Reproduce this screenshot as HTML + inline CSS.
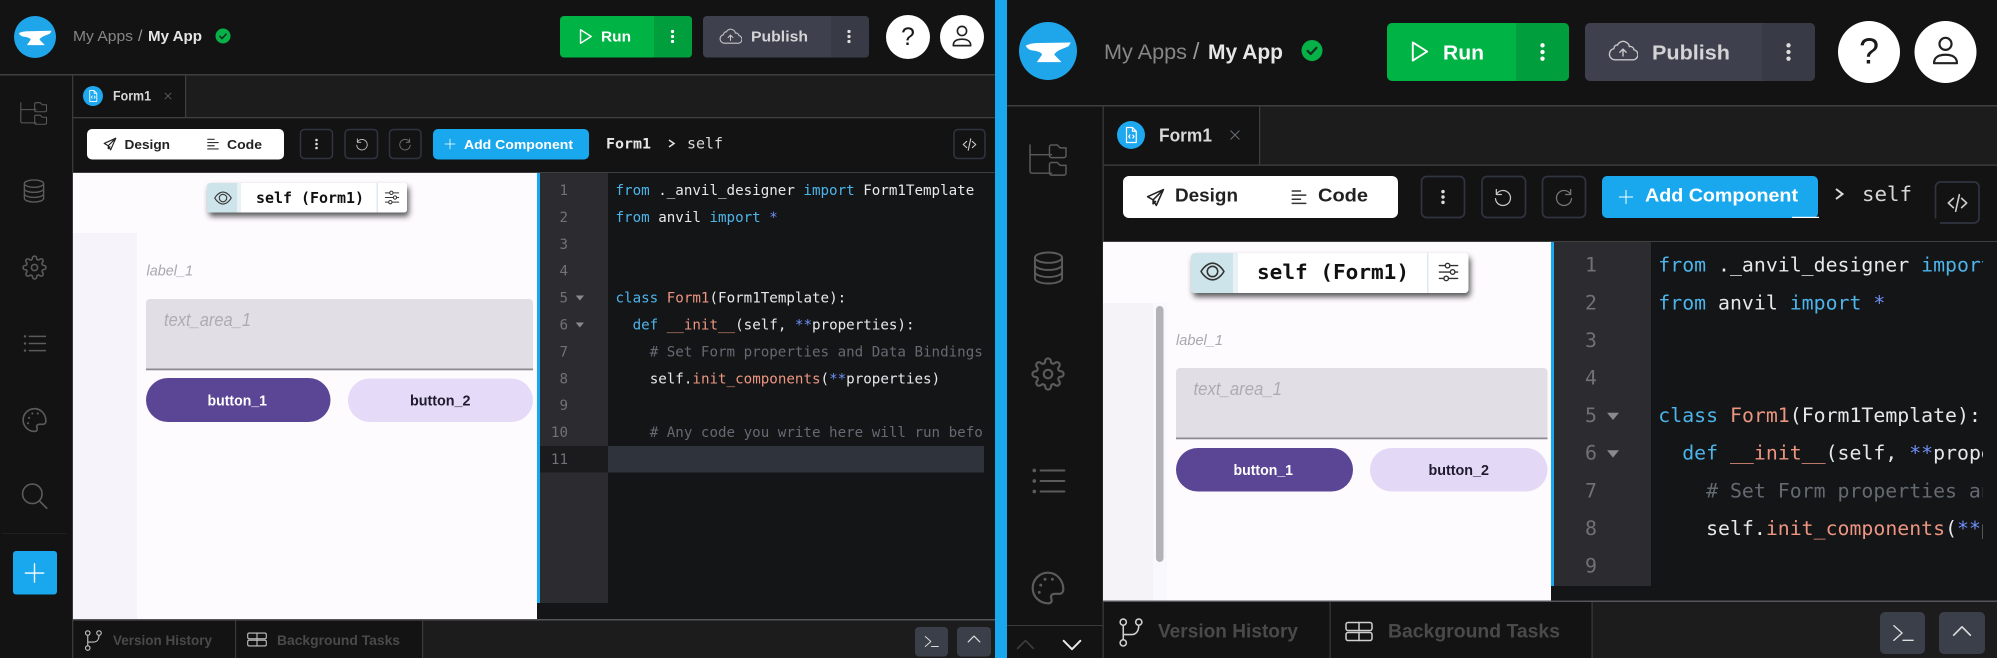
<!DOCTYPE html>
<html lang="en"><head><meta charset="utf-8"><title>Anvil Editor</title>
<style>
html,body{margin:0;padding:0;background:#131314;width:1997px;height:658px;overflow:hidden}
svg{display:block}
text{font-family:"Liberation Sans",sans-serif;white-space:pre}
.m{font-family:"DejaVu Sans Mono","Liberation Mono",monospace}
.b{font-weight:700}
.i{font-style:italic}
.ic{fill:none;stroke:currentColor;stroke-width:1.5;stroke-linecap:round;stroke-linejoin:round}
.k{fill:#4db4ea}.w{fill:#e6e8ea}.s{fill:#ec9580}.p{fill:#6f8ff7}.c{fill:#646a71}
.n{fill:#717176;text-anchor:end}
</style></head><body>
<svg xmlns="http://www.w3.org/2000/svg" width="1997" height="658" viewBox="0 0 1997 658">
<defs>
<symbol id="tree" viewBox="0 0 40 36"><g class="ic"><path d="M1 1v27a2 2 0 0 0 2 2h20M1 11h22"/><path d="M21 5a2 2 0 0 1 2-2h6l3 3h6v8a2 2 0 0 1-2 2H23a2 2 0 0 1-2-2zM21 23a2 2 0 0 1 2-2h6l3 3h6v8a2 2 0 0 1-2 2H23a2 2 0 0 1-2-2z" transform="translate(0 -2)"/></g></symbol>
<symbol id="db" viewBox="0 0 24 26"><g class="ic"><ellipse cx="12" cy="5" rx="10.5" ry="4"/><path d="M1.500 5v16c0 2.200 4.700 4 10.500 4s10.500-1.800 10.500-4V5M1.500 10.500c0 2.200 4.700 4 10.500 4s10.500-1.800 10.500-4M1.500 16c0 2.200 4.700 4 10.500 4s10.500-1.800 10.500-4"/></g></symbol>
<symbol id="gear" viewBox="0 0 24 24"><g class="ic"><circle cx="12" cy="12" r="3"/><path d="M19.400 15a1.650 1.650 0 0 0 .33 1.820l.06.06a2 2 0 0 1 0 2.830 2 2 0 0 1-2.830 0l-.06-.06a1.650 1.650 0 0 0-1.820-.33 1.650 1.650 0 0 0-1 1.510V21a2 2 0 0 1-2 2 2 2 0 0 1-2-2v-.09A1.650 1.650 0 0 0 9 19.400a1.650 1.650 0 0 0-1.820.33l-.06.06a2 2 0 0 1-2.830 0 2 2 0 0 1 0-2.830l.06-.06a1.650 1.650 0 0 0 .33-1.820 1.650 1.650 0 0 0-1.510-1H3a2 2 0 0 1-2-2 2 2 0 0 1 2-2h.09A1.650 1.650 0 0 0 4.600 9a1.650 1.650 0 0 0-.33-1.820l-.06-.06a2 2 0 0 1 0-2.830 2 2 0 0 1 2.830 0l.06.06a1.650 1.650 0 0 0 1.820.33H9a1.650 1.650 0 0 0 1-1.510V3a2 2 0 0 1 2-2 2 2 0 0 1 2 2v.09a1.650 1.650 0 0 0 1 1.510 1.650 1.650 0 0 0 1.820-.33l.06-.06a2 2 0 0 1 2.830 0 2 2 0 0 1 0 2.830l-.06.06a1.650 1.650 0 0 0-.33 1.820V9a1.650 1.650 0 0 0 1.510 1H21a2 2 0 0 1 2 2 2 2 0 0 1-2 2h-.09a1.650 1.650 0 0 0-1.510 1z"/></g></symbol>
<symbol id="list" viewBox="0 0 24 20"><g class="ic"><path d="M6 2.500h17M6 10h17M6 17.500h17"/></g><g fill="currentColor"><circle cx="1.500" cy="2.500" r="1.300"/><circle cx="1.500" cy="10" r="1.300"/><circle cx="1.500" cy="17.500" r="1.300"/></g></symbol>
<symbol id="pal" viewBox="0 0 24 24"><path class="ic" d="M12 1.500a10.500 10.500 0 1 0 0 21c2.300 0 3-1.600 2.300-3.100-.8-1.900.3-3.400 2.200-3.400h3c1.800 0 3-1.300 3-3.100C22.500 6.600 17.800 1.500 12 1.500z"/><g fill="currentColor"><circle cx="7" cy="10" r="1"/><circle cx="10" cy="6" r="1"/><circle cx="15" cy="6" r="1"/><circle cx="6" cy="15" r="1"/></g></symbol>
<symbol id="search" viewBox="0 0 24 24"><g class="ic"><circle cx="10" cy="10" r="9"/><path d="M16.500 16.500L23.500 23.500"/></g></symbol>
<symbol id="plus" viewBox="0 0 24 24"><path class="ic" d="M12 2v20M2 12h20"/></symbol>
<symbol id="plane" viewBox="0 0 24 24"><path class="ic" style="stroke-width:2" d="M22 2L2 11l7 4 4 7zM22 2L9 15v5l3-3"/></symbol>
<symbol id="align" viewBox="0 0 24 24"><path class="ic" style="stroke-width:2" d="M3 4h11M3 9.500h18M3 15h11M3 20.500h18"/></symbol>
<symbol id="dots" viewBox="0 0 24 24"><g fill="currentColor"><circle cx="12" cy="4" r="2.600"/><circle cx="12" cy="12" r="2.600"/><circle cx="12" cy="20" r="2.600"/></g></symbol>
<symbol id="undo" viewBox="0 0 24 24"><path class="ic" d="M4 3v6h6M4 9a9 9 0 1 1-1 5"/></symbol>
<symbol id="redo" viewBox="0 0 24 24"><path class="ic" d="M20 3v6h-6M20 9a9 9 0 1 0 1 5"/></symbol>
<symbol id="code" viewBox="0 0 24 24"><path class="ic" style="stroke-width:1.800" d="M7.500 7L2 12l5.500 5M16.500 7l5.500 5-5.500 5M14 3l-4 18"/></symbol>
<symbol id="play" viewBox="0 0 24 24"><path class="ic" style="stroke-width:2" d="M5 2.500l15 9.500-15 9.500z"/></symbol>
<symbol id="cloud" viewBox="0 0 24 24"><path class="ic" style="stroke-width:1.100" d="M5.500 19a4.500 4.500 0 0 1-.8-8.900C5 8 6 7 7.500 7.300 9 4.500 12 3.500 14.500 5c1.700.9 2.500 2.500 2.500 3.500 2-.5 3.700 1 3.700 2.500A4 4 0 0 1 19 19zM12 16V10.500M9.500 13L12 10.500l2.500 2.500"/></symbol>
<symbol id="user" viewBox="0 0 24 24"><g class="ic" style="stroke-width:1.800"><circle cx="12" cy="6.500" r="5"/><path d="M2.500 22.500c0-4.700 3.500-7 9.500-7s9.500 2.300 9.500 7z"/></g></symbol>
<symbol id="eye" viewBox="0 0 24 24"><g class="ic"><path d="M1 12s4.500-8 11-8 11 8 11 8-4.500 8-11 8-11-8-11-8z"/><circle cx="12" cy="12" r="5"/></g></symbol>
<symbol id="sliders" viewBox="0 0 24 24"><g class="ic"><path d="M2 5h6.500M13.500 5H22M2 12h12M19 12h3M2 19h5M12 19h10"/><circle cx="11" cy="5" r="2.500"/><circle cx="16.500" cy="12" r="2.500"/><circle cx="9.500" cy="19" r="2.500"/></g></symbol>
<symbol id="file" viewBox="0 0 24 24"><g class="ic" style="stroke-width:1.600"><path d="M6 2h8l5 5v15H6zM14 2v5h5"/><path d="M10.500 12l-1.500 2 1.500 2M14.500 12l1.500 2-1.500 2"/></g></symbol>
<symbol id="x" viewBox="0 0 24 24"><path class="ic" style="stroke-width:2.400" d="M3 3l18 18M21 3L3 21"/></symbol>
<symbol id="branch" viewBox="0 0 24 28"><g class="ic"><circle cx="5" cy="4" r="3"/><circle cx="5" cy="24" r="3"/><circle cx="20" cy="4" r="3"/><path d="M5 7v14M5 16h8c4 0 7-3 7-9"/></g></symbol>
<symbol id="tasks" viewBox="0 0 28 20"><g class="ic"><rect x="1" y="1" width="26" height="8" rx="2"/><rect x="1" y="11" width="26" height="8" rx="2"/><path d="M14 1v8M14 11v8"/></g></symbol>
<symbol id="term" viewBox="0 0 24 24"><path class="ic" d="M2 4l9 8-9 8M12 20h11"/></symbol>
<symbol id="up" viewBox="0 0 24 24"><path class="ic" style="stroke-width:2" d="M2 17L12 7l10 10"/></symbol>
<symbol id="down" viewBox="0 0 24 24"><path class="ic" style="stroke-width:2.400" d="M2 7l10 10L22 7"/></symbol>
<symbol id="logo" viewBox="0 0 42 42"><circle cx="21" cy="21" r="21" fill="#1fa5ea"/><path fill="#fff" d="M4.800 17.200C8 15.500 11 15.300 14 15.200L37.500 14.800 36 17.500C32 19.500 27 20.500 25.500 23.600L30.800 29.100H12.900L16.700 23.600C16 21.500 12 21 8.800 20.500 7 20 5.500 18.500 4.800 17.200z"/></symbol>
<symbol id="chk" viewBox="0 0 24 24"><circle cx="12" cy="12" r="12" fill="#06b147"/><path d="M7 12.500l3.500 3.500L17 9" fill="none" stroke="#11301c" stroke-width="2.600" stroke-linecap="round" stroke-linejoin="round"/></symbol>
<clipPath id="cl"><rect x="608" y="172" width="376" height="431"/></clipPath>
<clipPath id="cr"><rect x="1651" y="241" width="332" height="345"/></clipPath>
<filter id="sh" x="-10%" y="-30%" width="120%" height="170%"><feDropShadow dx="2" dy="4" stdDeviation="3" flood-color="#333" flood-opacity=".8"/></filter>
</defs>

<rect width="1997" height="658" fill="#131314"/>

<!-- LEFT PANEL -->
<rect x="185" y="75" width="810" height="42" fill="#1c1c1d"/>
<rect x="422" y="620" width="573" height="38" fill="#1c1c1d"/>
<rect x="0" y="74" width="995" height="1.500" fill="#3f3f40"/>
<rect x="73" y="117" width="922" height="1.300" fill="#3f3f40"/>
<rect x="72" y="75" width="1.300" height="583" fill="#3a3a3b"/>
<rect x="185" y="75" width="1.200" height="42" fill="#3f3f40"/>
<rect x="73" y="172" width="922" height="1.300" fill="#3f3f40"/>
<use href="#logo" x="14" y="16" width="42" height="42"/>
<text x="73" y="41" font-size="15" textLength="60" lengthAdjust="spacingAndGlyphs" fill="#868686">My Apps</text>
<text x="138" y="41" font-size="16" fill="#9a9a9a">/</text>
<text class="b" x="148" y="41" font-size="15" textLength="54" lengthAdjust="spacingAndGlyphs" fill="#e6e6e6">My App</text>
<use href="#chk" x="215.500" y="28.500" width="15" height="15"/>
<rect x="560" y="16" width="132" height="41.500" rx="4" fill="#00b345"/>
<path d="M654 16h34a4 4 0 0 1 4 4v33.500a4 4 0 0 1-4 4h-34z" fill="#009e3d"/>
<use href="#play" x="577" y="28" width="17" height="17" style="color:#fff"/>
<text class="b" x="601" y="41.500" font-size="15" textLength="30" lengthAdjust="spacingAndGlyphs" fill="#fff">Run</text>
<use href="#dots" x="665" y="29" width="15" height="15" style="color:#fff"/>
<rect x="703" y="16" width="166" height="41.500" rx="4" fill="#3e414d"/>
<path d="M831 16h34a4 4 0 0 1 4 4v33.500a4 4 0 0 1-4 4h-34z" fill="#383b45"/>
<use href="#cloud" x="719" y="25" width="23" height="23" style="color:#c8c8c8"/>
<text class="b" x="751" y="41.500" font-size="15" textLength="57" lengthAdjust="spacingAndGlyphs" fill="#d4d4d6">Publish</text>
<use href="#dots" x="841.500" y="29" width="15" height="15" style="color:#ddd"/>
<circle cx="908" cy="37" r="22" fill="#fff"/><text x="908" y="45" font-size="25" text-anchor="middle" fill="#1a1a1a">?</text>
<circle cx="962" cy="37" r="22" fill="#fff"/><use href="#user" x="951" y="25" width="22" height="22" style="color:#222"/>

<circle cx="93" cy="96" r="10" fill="#1ea8ef"/><use href="#file" x="86.500" y="89.500" width="13" height="13" style="color:#fff"/>
<text class="b" x="113" y="100.500" font-size="13.500" textLength="38" lengthAdjust="spacingAndGlyphs" fill="#d8d8d8">Form1</text>
<use href="#x" x="164" y="92" width="8" height="8" style="color:#666a72"/>

<rect x="87" y="129" width="197" height="30.500" rx="5" fill="#fff"/>
<use href="#plane" x="103" y="137" width="14" height="14" style="color:#222"/>
<text class="b" x="124.500" y="149" font-size="13" textLength="45.500" lengthAdjust="spacingAndGlyphs" fill="#222">Design</text>
<use href="#align" x="206" y="137" width="14" height="14" style="color:#333"/>
<text class="b" x="227" y="149" font-size="13" textLength="35" lengthAdjust="spacingAndGlyphs" fill="#222">Code</text>
<g fill="none" stroke="#2f3440" stroke-width="1.500"><rect x="300.500" y="129.500" width="32" height="29" rx="4"/><rect x="345" y="129.500" width="32.500" height="29" rx="4"/><rect x="389.500" y="129.500" width="31.500" height="29" rx="4"/><rect x="954" y="129.500" width="31" height="29" rx="4"/></g>
<use href="#dots" x="310.500" y="138" width="12" height="12" style="color:#ddd"/>
<use href="#undo" x="355" y="137" width="14" height="14" style="color:#c8c8c8"/>
<use href="#redo" x="398" y="137" width="14" height="14" style="color:#777"/>
<rect x="433" y="129" width="156" height="30.500" rx="5" fill="#19a8ee"/>
<use href="#plus" x="444" y="138" width="12" height="12" style="color:#fff"/>
<text class="b" x="464" y="149" font-size="13" textLength="109" lengthAdjust="spacingAndGlyphs" fill="#fff">Add Component</text>
<text class="m b" x="606" y="148.500" font-size="14.500" textLength="45" lengthAdjust="spacingAndGlyphs" fill="#e8e8e8">Form1</text>
<path d="M669 140l5 3.500-5 3.500" fill="none" stroke="#ddd" stroke-width="1.600"/>
<text class="m" x="687" y="148.500" font-size="15" textLength="36" lengthAdjust="spacingAndGlyphs" fill="#d8d8d8">self</text>
<use href="#code" x="961.500" y="137" width="16" height="15" style="color:#ccc"/>

<g style="color:#5b5b5b">
<use href="#tree" x="20" y="102" width="28" height="25"/>
<use href="#db" x="23" y="179" width="22" height="24"/>
<use href="#gear" x="22" y="255" width="25" height="25"/>
<use href="#list" x="23" y="334" width="24" height="19"/>
<use href="#pal" x="21.500" y="407" width="26" height="26"/>
<use href="#search" x="21.500" y="483" width="26" height="26"/>
</g>
<rect x="2" y="533" width="65" height="1" fill="#1f1f20"/>
<rect x="13" y="551" width="44" height="43.500" rx="3" fill="#19a8ee"/>
<use href="#plus" x="23.500" y="562" width="22" height="22" style="color:#fff"/>

<rect x="73" y="173" width="464" height="446" fill="#fefbff"/>
<rect x="73" y="233" width="64" height="386" fill="#f6f3fa"/>
<text class="i" x="146.500" y="275.700" font-size="15" textLength="46.500" lengthAdjust="spacingAndGlyphs" fill="#a9a7ad">label_1</text>
<path d="M146 303a4 4 0 0 1 4-4h379a4 4 0 0 1 4 4v67H146z" fill="#e1dee6"/>
<rect x="146" y="368.500" width="387" height="1.800" fill="#8d8a92"/>
<text class="i" x="164" y="326" font-size="18" textLength="87" lengthAdjust="spacingAndGlyphs" fill="#aeacb2">text_area_1</text>
<rect x="146" y="378" width="184.500" height="44" rx="22" fill="#5b4696"/>
<text class="b" x="207.500" y="405.700" font-size="14.500" textLength="59.500" lengthAdjust="spacingAndGlyphs" fill="#fff">button_1</text>
<rect x="348" y="378.500" width="185" height="43.500" rx="21.700" fill="#e5daf7"/>
<text class="b" x="410" y="405.700" font-size="14.500" textLength="60.500" lengthAdjust="spacingAndGlyphs" fill="#1f1a2e">button_2</text>

<rect x="207" y="183" width="200" height="29.500" rx="3" fill="#fff" filter="url(#sh)"/>
<path d="M210 183h27v29.500h-27a3 3 0 0 1-3-3v-23.500a3 3 0 0 1 3-3z" fill="#cde4ea"/>
<rect x="237" y="183" width="4" height="29.500" fill="#e8f2f5"/>
<rect x="376.500" y="183" width="1.500" height="29.500" fill="#dfeaf0"/>
<use href="#eye" x="214" y="189" width="18" height="18" style="color:#333"/>
<text class="m b" x="256" y="203" font-size="14.700" textLength="108" lengthAdjust="spacingAndGlyphs" fill="#111">self (Form1)</text>
<use href="#sliders" x="384" y="189.500" width="16" height="16" style="color:#333"/>

<rect x="537" y="173" width="458" height="446" fill="#141517"/>
<rect x="537" y="173" width="3" height="430" fill="#19a8ee"/>
<rect x="540" y="173" width="68" height="430" fill="#2c2c30"/>
<rect x="540" y="446" width="68" height="26.500" fill="#1b1b1e"/>
<rect x="608" y="446" width="376" height="26.500" fill="#2f333b"/>
<g class="m" font-size="14.200">
<text class="m n" x="568" y="195">1</text><text class="m n" x="568" y="222">2</text><text class="m n" x="568" y="249">3</text><text class="m n" x="568" y="275.700">4</text><text class="m n" x="568" y="302.600">5</text><text class="m n" x="568" y="329.500">6</text><text class="m n" x="568" y="356.400">7</text><text class="m n" x="568" y="383.300">8</text><text class="m n" x="568" y="410.200">9</text><text class="m n" x="568" y="437.100">10</text><text class="m n" x="568" y="464">11</text>
</g>
<path d="M575.700 295.500h8.300l-4.150 5zM575.700 322.500h8.300l-4.150 5z" fill="#8a8a8e"/>
<g clip-path="url(#cl)" font-size="14.200">
<text class="m w" x="615.500" y="195"><tspan class="k">from</tspan> ._anvil_designer <tspan class="k">import</tspan> Form1Template</text>
<text class="m w" x="615.500" y="222"><tspan class="k">from</tspan> anvil <tspan class="k">import</tspan> <tspan class="p">*</tspan></text>
<text class="m w" x="615.500" y="302.600"><tspan class="k">class</tspan> <tspan class="s">Form1</tspan>(Form1Template):</text>
<text class="m w" x="632.600" y="329.500"><tspan class="k">def</tspan> <tspan class="s">__init__</tspan>(self, <tspan class="p">**</tspan>properties):</text>
<text class="m c" x="649.700" y="356.400"># Set Form properties and Data Bindings.</text>
<text class="m w" x="649.700" y="383.300">self.<tspan class="s">init_components</tspan>(<tspan class="p">**</tspan>properties)</text>
<text class="m c" x="649.700" y="437.100"># Any code you write here will run before the form opens.</text>
</g>

<rect x="73" y="619" width="922" height="1.500" fill="#55555a"/>
<rect x="235" y="620" width="1.200" height="38" fill="#3a3a3b"/>
<rect x="422" y="620" width="1.200" height="38" fill="#3a3a3b"/>
<use href="#branch" x="84" y="630" width="18" height="21" style="color:#c4c4c4"/>
<text class="b" x="113" y="645" font-size="13.500" textLength="99" lengthAdjust="spacingAndGlyphs" fill="#4a4a4a">Version History</text>
<use href="#tasks" x="247" y="632" width="20" height="15" style="color:#c4c4c4"/>
<text class="b" x="277" y="645" font-size="13.500" textLength="123" lengthAdjust="spacingAndGlyphs" fill="#4a4a4a">Background Tasks</text>
<rect x="915" y="627" width="33" height="29.500" rx="4" fill="#3b3f4a"/>
<use href="#term" x="924" y="634" width="15" height="15" style="color:#ddd"/>
<rect x="957" y="627" width="34" height="29.500" rx="4" fill="#3b3f4a"/>
<use href="#up" x="967" y="632" width="14" height="14" style="color:#ddd"/>

<!-- DIVIDER -->
<rect x="995" y="0" width="12" height="658" fill="#19a8ee"/>

<!-- RIGHT PANEL -->
<rect x="1259" y="106" width="738" height="59" fill="#1c1c1d"/>
<rect x="1592" y="602" width="405" height="56" fill="#1c1c1d"/>
<rect x="1007" y="105" width="990" height="1.500" fill="#3f3f40"/>
<rect x="1103" y="164.500" width="894" height="1.300" fill="#3f3f40"/>
<rect x="1102.500" y="106" width="1.300" height="552" fill="#3a3a3b"/>
<rect x="1259" y="106" width="1.200" height="59" fill="#3f3f40"/>
<rect x="1103" y="241" width="894" height="1.300" fill="#3f3f40"/>
<use href="#logo" x="1019" y="22" width="58" height="58"/>
<text x="1104" y="59" font-size="21" textLength="83" lengthAdjust="spacingAndGlyphs" fill="#868686">My Apps</text>
<text x="1193" y="59" font-size="23" fill="#9a9a9a">/</text>
<text class="b" x="1208" y="59" font-size="21" textLength="75" lengthAdjust="spacingAndGlyphs" fill="#e6e6e6">My App</text>
<use href="#chk" x="1301.500" y="40" width="21" height="21"/>
<rect x="1387" y="23" width="182" height="58" rx="5" fill="#00b345"/>
<path d="M1516 23h48a5 5 0 0 1 5 5v48a5 5 0 0 1-5 5h-48z" fill="#009e3d"/>
<use href="#play" x="1408" y="40" width="23" height="23" style="color:#fff"/>
<text class="b" x="1443" y="59.300" font-size="20" textLength="41" lengthAdjust="spacingAndGlyphs" fill="#fff">Run</text>
<use href="#dots" x="1532.500" y="42" width="20" height="20" style="color:#fff"/>
<rect x="1585" y="23" width="230" height="58" rx="5" fill="#3e414d"/>
<path d="M1762 23h48a5 5 0 0 1 5 5v48a5 5 0 0 1-5 5h-48z" fill="#383b45"/>
<use href="#cloud" x="1608" y="36" width="30" height="30" style="color:#c8c8c8"/>
<text class="b" x="1652" y="59.300" font-size="20" textLength="78" lengthAdjust="spacingAndGlyphs" fill="#d4d4d6">Publish</text>
<use href="#dots" x="1778.500" y="42" width="20" height="20" style="color:#ddd"/>
<circle cx="1869" cy="52" r="31" fill="#fff"/><text x="1869" y="63.500" font-size="36" text-anchor="middle" fill="#1a1a1a">?</text>
<circle cx="1945.500" cy="52" r="31" fill="#fff"/><use href="#user" x="1931" y="35" width="29" height="31" style="color:#222"/>

<circle cx="1131" cy="135" r="14" fill="#1ea8ef"/><use href="#file" x="1122" y="126" width="18" height="18" style="color:#fff"/>
<text class="b" x="1159" y="141.700" font-size="18" textLength="53" lengthAdjust="spacingAndGlyphs" fill="#d8d8d8">Form1</text>
<use href="#x" x="1229.500" y="129.500" width="11" height="11" style="color:#666a72"/>

<rect x="1123" y="176" width="275" height="42" rx="6" fill="#fff"/>
<use href="#plane" x="1146" y="188" width="19" height="19" style="color:#222"/>
<text class="b" x="1175" y="201.500" font-size="18" textLength="63" lengthAdjust="spacingAndGlyphs" fill="#222">Design</text>
<use href="#align" x="1290" y="188" width="18" height="18" style="color:#333"/>
<text class="b" x="1318" y="201.500" font-size="18" textLength="50" lengthAdjust="spacingAndGlyphs" fill="#222">Code</text>
<g fill="none" stroke="#2f3440" stroke-width="1.700"><rect x="1421.500" y="176.500" width="43" height="41" rx="5"/><rect x="1482" y="176.500" width="43.500" height="41" rx="5"/><rect x="1542.500" y="176.500" width="43" height="41" rx="5"/><rect x="1935.500" y="182" width="43.500" height="41" rx="5"/></g>
<rect x="1934" y="218.500" width="6" height="6" fill="#131314"/>
<use href="#dots" x="1435" y="189" width="16" height="16" style="color:#ddd"/>
<use href="#undo" x="1493" y="187" width="20" height="20" style="color:#c8c8c8"/>
<use href="#redo" x="1554" y="187" width="20" height="20" style="color:#777"/>
<rect x="1602" y="176" width="216" height="42" rx="5" fill="#19a8ee"/>
<rect x="1792" y="216.800" width="27" height="1.200" fill="#fff"/>
<use href="#plus" x="1618" y="189" width="16" height="16" style="color:#fff"/>
<text class="b" x="1645" y="201.500" font-size="18" textLength="153" lengthAdjust="spacingAndGlyphs" fill="#fff">Add Component</text>
<path d="M1836 189l6.500 5-6.500 5" fill="none" stroke="#ddd" stroke-width="2"/>
<text class="m" x="1862" y="201" font-size="20.500" textLength="50" lengthAdjust="spacingAndGlyphs" fill="#d8d8d8">self</text>
<use href="#code" x="1946" y="192" width="23" height="22" style="color:#ccc"/>

<g style="color:#5b5b5b">
<use href="#tree" x="1029" y="144" width="39" height="35"/>
<use href="#db" x="1033" y="250" width="31" height="36"/>
<use href="#gear" x="1031" y="356.500" width="34" height="35"/>
<use href="#list" x="1032" y="467" width="34" height="28"/>
<use href="#pal" x="1030.500" y="570" width="35" height="36"/>
</g>
<rect x="1007" y="625" width="96" height="1" fill="#3a3a3b"/>
<use href="#up" x="1016" y="635" width="19" height="19" style="color:#3e3e40"/>
<use href="#down" x="1062" y="635" width="20" height="20" style="color:#e8e8e8"/>

<rect x="1103" y="242" width="448" height="360" fill="#fefbff"/>
<rect x="1103" y="303" width="50" height="299" fill="#f5f2f8"/>
<rect x="1153" y="303" width="14" height="299" fill="#f9f8fc"/>
<rect x="1156" y="306" width="7.500" height="256" rx="3.700" fill="#b3b2b6"/>
<text class="i" x="1176" y="345" font-size="15" textLength="47" lengthAdjust="spacingAndGlyphs" fill="#a9a7ad">label_1</text>
<path d="M1176 372a4 4 0 0 1 4-4h363.500a4 4 0 0 1 4 4v67h-371.500z" fill="#e1dee6"/>
<rect x="1176" y="437.500" width="371.500" height="1.800" fill="#8d8a92"/>
<text class="i" x="1193.500" y="395" font-size="18" textLength="88.500" lengthAdjust="spacingAndGlyphs" fill="#aeacb2">text_area_1</text>
<rect x="1176" y="448" width="177" height="43.500" rx="21.700" fill="#5b4696"/>
<text class="b" x="1233.500" y="475" font-size="14.500" textLength="59.500" lengthAdjust="spacingAndGlyphs" fill="#fff">button_1</text>
<rect x="1370" y="448" width="177.500" height="43.500" rx="21.700" fill="#e3d8f6"/>
<text class="b" x="1428.500" y="475" font-size="14.500" textLength="60.500" lengthAdjust="spacingAndGlyphs" fill="#1f1a2e">button_2</text>

<rect x="1191" y="253" width="277.500" height="40" rx="4" fill="#fff" filter="url(#sh)"/>
<path d="M1195 253h38v40h-38a4 4 0 0 1-4-4v-32a4 4 0 0 1 4-4z" fill="#cde4ea"/>
<rect x="1233" y="253" width="5" height="40" fill="#e8f2f5"/>
<rect x="1427" y="253" width="1.500" height="40" fill="#dfeaf0"/>
<use href="#eye" x="1200" y="259" width="25" height="25" style="color:#333"/>
<text class="m b" x="1257" y="279" font-size="20.500" textLength="152" lengthAdjust="spacingAndGlyphs" fill="#111">self (Form1)</text>
<use href="#sliders" x="1437" y="261" width="23" height="22" style="color:#333"/>

<rect x="1551" y="242" width="446" height="359" fill="#141517"/>
<rect x="1551" y="242" width="3" height="344" fill="#19a8ee"/>
<rect x="1554" y="242" width="97" height="344" fill="#2c2c30"/>
<g font-size="19.850">
<text class="m n" x="1597" y="271.700">1</text><text class="m n" x="1597" y="309.300">2</text><text class="m n" x="1597" y="346.900">3</text><text class="m n" x="1597" y="384.500">4</text><text class="m n" x="1597" y="422">5</text><text class="m n" x="1597" y="459.700">6</text><text class="m n" x="1597" y="497.300">7</text><text class="m n" x="1597" y="534.900">8</text><text class="m n" x="1597" y="572.500">9</text>
</g>
<path d="M1607 412.700h12l-6 7.300zM1607 450.300h12l-6 7.300z" fill="#8a8a8e"/>
<g clip-path="url(#cr)" font-size="19.850">
<text class="m w" x="1658.300" y="271.700"><tspan class="k">from</tspan> ._anvil_designer <tspan class="k">import</tspan> Form1Template</text>
<text class="m w" x="1658.300" y="309.300"><tspan class="k">from</tspan> anvil <tspan class="k">import</tspan> <tspan class="p">*</tspan></text>
<text class="m w" x="1658.300" y="422"><tspan class="k">class</tspan> <tspan class="s">Form1</tspan>(Form1Template):</text>
<text class="m w" x="1682.200" y="459.700"><tspan class="k">def</tspan> <tspan class="s">__init__</tspan>(self, <tspan class="p">**</tspan>properties):</text>
<text class="m c" x="1706.100" y="497.300"># Set Form properties and Data Bindings.</text>
<text class="m w" x="1706.100" y="534.900">self.<tspan class="s">init_components</tspan>(<tspan class="p">**</tspan>properties)</text>
</g>

<rect x="1103" y="600.500" width="894" height="1.500" fill="#55555a"/>
<rect x="1329.500" y="602" width="1.200" height="56" fill="#3a3a3b"/>
<rect x="1591.500" y="602" width="1.200" height="56" fill="#3a3a3b"/>
<use href="#branch" x="1118" y="618" width="25" height="29" style="color:#d0d0d0"/>
<text class="b" x="1158" y="637.700" font-size="19" textLength="140" lengthAdjust="spacingAndGlyphs" fill="#4a4a4a">Version History</text>
<use href="#tasks" x="1345" y="621" width="28" height="21" style="color:#d0d0d0"/>
<text class="b" x="1388" y="637.700" font-size="19" textLength="172" lengthAdjust="spacingAndGlyphs" fill="#4a4a4a">Background Tasks</text>
<rect x="1880" y="612" width="45" height="42" rx="5" fill="#3b3f4a"/>
<use href="#term" x="1892" y="622" width="22" height="22" style="color:#ddd"/>
<rect x="1939" y="612" width="46" height="42" rx="5" fill="#3b3f4a"/>
<use href="#up" x="1952" y="621" width="20" height="20" style="color:#ddd"/>
</svg>
</body></html>
